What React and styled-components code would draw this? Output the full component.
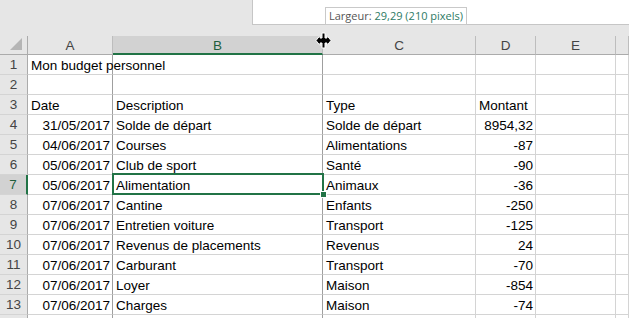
import React from "react";
import styled, { createGlobalStyle, css } from "styled-components";

const GlobalStyle = createGlobalStyle`
  html, body { margin: 0; padding: 0; background: #ffffff; }
  body { font-family: "Liberation Sans", Arial, sans-serif; overflow: hidden; }
`;

const COLUMNS = ["A", "B", "C", "D", "E", ""];
const ACTIVE_COL = "B";
const ACTIVE_ROW = 7;

// row 14 is only a sliver at the bottom edge, its label falls outside the view
const rows = [
  { n: 1, title: "Mon budget personnel" },
  { n: 2 },
  { n: 3, a: "Date", b: "Description", c: "Type", d: "Montant", head: true },
  { n: 4, a: "31/05/2017", b: "Solde de départ", c: "Solde de départ", d: "8954,32" },
  { n: 5, a: "04/06/2017", b: "Courses", c: "Alimentations", d: "-87" },
  { n: 6, a: "05/06/2017", b: "Club de sport", c: "Santé", d: "-90" },
  { n: 7, a: "05/06/2017", b: "Alimentation", c: "Animaux", d: "-36" },
  { n: 8, a: "07/06/2017", b: "Cantine", c: "Enfants", d: "-250" },
  { n: 9, a: "07/06/2017", b: "Entretien voiture", c: "Transport", d: "-125" },
  { n: 10, a: "07/06/2017", b: "Revenus de placements", c: "Revenus", d: "24" },
  { n: 11, a: "07/06/2017", b: "Carburant", c: "Transport", d: "-70" },
  { n: 12, a: "07/06/2017", b: "Loyer", c: "Maison", d: "-854" },
  { n: 13, a: "07/06/2017", b: "Charges", c: "Maison", d: "-74" },
  { n: 14, hidden: true },
];

const App = () => {
  return (
    <>
      <GlobalStyle />
      <Window>
        <TopBar>
          <FormulaBox />
        </TopBar>
        <Tooltip>
          Largeur: <TipValue>29,29 (210 pixels)</TipValue>
        </Tooltip>
        <ResizeCursor />

        <Sheet>
          <Corner>
            <svg width="13" height="13" viewBox="0 0 13 13">
              <polygon points="12,0 12,12 0,12" fill="#b5b5b5" />
            </svg>
          </Corner>
          {COLUMNS.map((c, i) => (
            <ColHead key={i} $active={c === ACTIVE_COL}>
              {c}
            </ColHead>
          ))}

          {rows.map((r) => (
            <React.Fragment key={r.n}>
              <RowHead $active={r.n === ACTIVE_ROW}>{r.hidden ? "" : r.n}</RowHead>
              <Cell $dark $align={r.head || r.title ? "left" : "right"}>
                {r.title ? <Overflow>{r.title}</Overflow> : r.a}
              </Cell>
              <Cell $dark $selected={r.n === ACTIVE_ROW}>
                {r.b}
              </Cell>
              <Cell>{r.c}</Cell>
              <Cell $align={r.head ? "left" : "right"}>{r.d}</Cell>
              <Cell />
              <Cell />
            </React.Fragment>
          ))}
        </Sheet>
      </Window>
    </>
  );
};

const ResizeCursor = () => (
  <CursorWrap>
    <svg width="17" height="17" viewBox="0 0 17 17">
      <path
        d="M7 1h3v5h2V3.5L16 8.5 12 13.5V11h-2v5H7v-5H5v2.5L1 8.5 5 3.5V6h2z"
        fill="#000"
        stroke="#fff"
        strokeWidth="1"
      />
    </svg>
  </CursorWrap>
);

const Window = styled.div`
  position: relative;
  width: 629px;
  height: 318px;
  overflow: hidden;
  background: #ffffff;
`;

const TopBar = styled.div`
  height: 36px;
  background: #e6e6e6;
  display: flex;
  justify-content: flex-end;
  align-items: flex-start;
`;

const FormulaBox = styled.div`
  width: 377px;
  height: 25px;
  box-sizing: border-box;
  background: #ffffff;
  border-left: 1px solid #c6c6c6;
  border-bottom: 1px solid #c6c6c6;
`;

const Tooltip = styled.div`
  position: absolute;
  left: 325px;
  top: 7px;
  height: 18px;
  box-sizing: border-box;
  padding: 0 3px;
  background: #ffffff;
  border: 1px solid #c9c9c9;
  font-family: "Open Sans", "Noto Sans", sans-serif;
  font-size: 11px;
  line-height: 16px;
  color: #555555;
  white-space: nowrap;
  z-index: 3;
`;

const TipValue = styled.span`
  color: #2d7a64;
`;

const CursorWrap = styled.div`
  position: absolute;
  left: 315px;
  top: 32px;
  width: 17px;
  height: 17px;
  z-index: 4;
`;

const Sheet = styled.div`
  display: grid;
  grid-template-columns: 28px 85px 210px 153px 60px 80px 1fr;
  grid-template-rows: 19px;
  grid-auto-rows: 20px;
  font-size: 13.5px;
  color: #000000;
`;

const headBase = css`
  box-sizing: border-box;
  background: #e6e6e6;
  color: #444444;
  display: flex;
  align-items: center;
  justify-content: center;
`;

const Corner = styled.div`
  ${headBase};
  align-items: flex-end;
  justify-content: flex-end;
  padding: 0 4px 3px 0;
  border-right: 1px solid #ababab;
  border-bottom: 1px solid #ababab;
`;

const ColHead = styled.div`
  ${headBase};
  border-right: 1px solid #bdbdbd;
  border-bottom: 1px solid #ababab;
  padding-top: 1px;
  ${(p) =>
    p.$active &&
    css`
      background: #d2d2d2;
      color: #1f5f3d;
      border-bottom: 2px solid #217346;
    `}
`;

const RowHead = styled.div`
  ${headBase};
  border-right: 1px solid #ababab;
  border-bottom: 1px solid #d4d4d4;
  ${(p) =>
    p.$active &&
    css`
      background: #d2d2d2;
      color: #1f5f3d;
      border-right: 2px solid #217346;
    `}
`;

const Cell = styled.div`
  position: relative;
  box-sizing: border-box;
  display: flex;
  align-items: center;
  justify-content: ${(p) => (p.$align === "right" ? "flex-end" : "flex-start")};
  padding: 1px 2px 0 3px;
  border-right: 1px solid ${(p) => (p.$dark ? "#9f9f9f" : "#d4d4d4")};
  border-bottom: 1px solid #d4d4d4;
  white-space: nowrap;
  ${(p) =>
    p.$selected &&
    css`
      &::after {
        content: "";
        position: absolute;
        left: -1px;
        top: -2px;
        right: -2px;
        bottom: -1px;
        border: 2px solid #217346;
        pointer-events: none;
      }
      &::before {
        content: "";
        position: absolute;
        right: -5px;
        bottom: -4px;
        width: 5px;
        height: 5px;
        background: #217346;
        border: 1px solid #ffffff;
        z-index: 2;
      }
    `}
`;

const Overflow = styled.span`
  overflow: visible;
  width: 0;
`;

export default App;
